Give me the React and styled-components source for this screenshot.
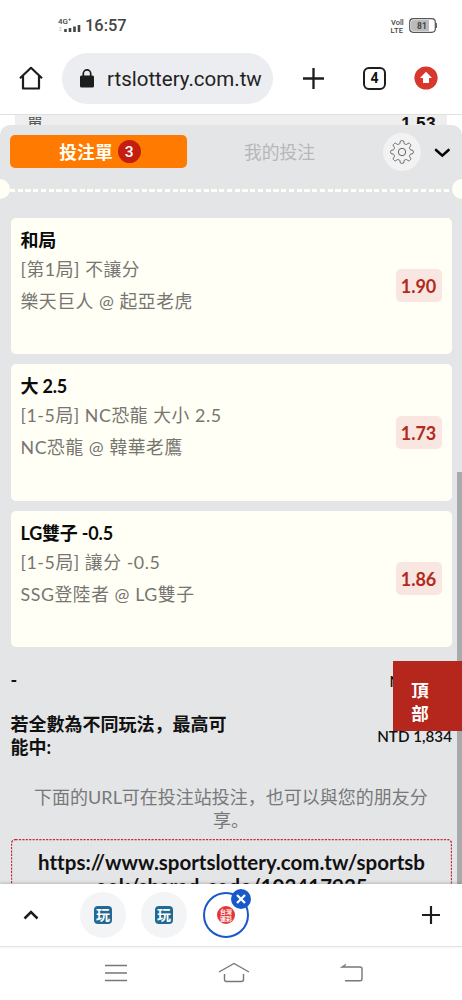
import React from "react";
import styled, { createGlobalStyle } from "styled-components";

const Global = createGlobalStyle`
  * { box-sizing: border-box; }
  body { margin: 0; background: #fff; font-family: Lato, "Noto Sans CJK SC", sans-serif; color: #111; }
`;

const Screen = styled.div`
  width: 462px;
  height: 1000px;
  display: flex;
  flex-direction: column;
  overflow: hidden;
  background: #fff;
`;

const StatusBar = styled.header`
  height: 50px;
  flex: none;
  display: flex;
  align-items: center;
  padding: 1px 25px 0 57px;
  font-family: Roboto, sans-serif;
  color: #444;
`;

const Clock = styled.span`
  margin-left: 4px;
  font-size: 16.4px;
  font-weight: 500;
  line-height: 20px;
`;

const Signal = styled.svg`
  width: 24px;
  height: 18px;
`;

const StatusRight = styled.div`
  margin-left: auto;
  display: flex;
  align-items: center;
  gap: 5px;
`;

const BrowserBar = styled.div`
  height: 65px;
  flex: none;
  display: flex;
  align-items: center;
  padding: 0 24px 8px 19px;
  border-bottom: 1px solid #e0e0e0;
`;

const Address = styled.div`
  flex: none;
  width: 211px;
  height: 51px;
  margin: 0 30px 0 19px;
  padding: 1px 0 0 17px;
  display: flex;
  align-items: center;
  gap: 12px;
  border-radius: 26px;
  background: #ecedf1;
  font: 400 20.5px/24px Roboto, sans-serif;
  color: #222;
  white-space: nowrap;
`;

const TabCount = styled.div`
  flex: none;
  width: 23px;
  height: 23px;
  margin: 0 28px 0 39px;
  border: 2px solid #1d1d1d;
  border-radius: 6px;
  text-align: center;
  font: 700 14px/19px Roboto, sans-serif;
`;

const Viewport = styled.main`
  height: 769px;
  flex: none;
  overflow: hidden;
  position: relative;
`;

const PageRow = styled.div`
  height: 22px;
  margin: 0 15px;
  padding: 0 11px 0 12px;
  display: flex;
  justify-content: space-between;
  background: #eee;
  color: #555;
  font-size: 16px;
  line-height: 18px;
  b { color: #111; font: 700 17.5px/19px "Liberation Sans", sans-serif; letter-spacing: 0.2px; }
`;

const Sheet = styled.section`
  position: relative;
  height: 760px;
  margin-top: -12px;
  border-radius: 10px 10px 0 0;
  background: #e4e5e7;
`;

const SheetHeader = styled.div`
  display: flex;
  align-items: center;
  height: 54px;
  padding: 0 11px 1px 10px;
`;

const SlipTab = styled.button`
  display: flex;
  align-items: center;
  justify-content: center;
  width: 177px;
  height: 33px;
  padding: 0 0 0 3px;
  gap: 5px;
  border: 0;
  border-radius: 5px;
  background: #ff7a00;
  color: #fffff5;
  font: 700 17.8px/26px Lato, "Noto Sans CJK SC", sans-serif;
`;

const Count = styled.span`
  width: 23px;
  height: 23px;
  border-radius: 50%;
  background: #c31e10;
  color: #fff;
  font: 500 15.5px/24px Roboto, sans-serif;
`;

const MyBets = styled.div`
  width: 185px;
  padding-bottom: 1px;
  text-align: center;
  font-size: 17.8px;
  font-weight: 400;
  color: #b6b7b9;
`;

const GearButton = styled.div`
  width: 38px;
  height: 38px;
  margin: 0 12px 0 11px;
  display: grid;
  place-items: center;
  border-radius: 50%;
  background: #f2f2f2;
`;

const Tear = styled.div`
  height: 20px;
  display: flex;
  align-items: center;
  overflow: hidden;
  &::before, &::after {
    content: "";
    width: 10px;
    height: 20px;
    background: #fffff5;
  }
  &::before { border-radius: 0 10px 10px 0; }
  &::after { border-radius: 10px 0 0 10px; }
`;

const Dashes = styled.div`
  flex: 1;
  height: 3px;
  margin-top: 2px;
  background: repeating-linear-gradient(90deg, #fffffa 0 5px, transparent 5px 7.75px);
`;

const Cards = styled.div`
  display: flex;
  flex-direction: column;
  gap: 10px;
  padding: 18.5px 10.5px 0 10.5px;
`;

const Card = styled.article`
  display: flex;
  align-items: center;
  justify-content: space-between;
  height: 136.5px;
  padding: 0 10px;
  border-radius: 5px;
  background: #fffff5;
`;

const CardText = styled.div`
  align-self: flex-start;
  padding-top: 9px;
  font-size: 17.8px;
  font-weight: 400;
  line-height: 32px;
  letter-spacing: 0.56px;
  color: #777571;
  h3 {
    margin: 0 0 -1px;
    font-size: 18px;
    font-weight: 700;
    line-height: 27px;
    letter-spacing: -0.2px;
    color: #0b0b0b;
  }
`;

const Odds = styled.div`
  width: 46px;
  height: 33px;
  border-radius: 5px;
  background: #f9e6e1;
  color: #b12a20;
  text-align: center;
  font-size: 18px;
  font-weight: 700;
  line-height: 34px;
`;

const Summary = styled.div`
  display: flex;
  justify-content: space-between;
  align-items: center;
  padding: 0 10px 0 10.5px;
  height: ${(p) => p.$height}px;
  font-size: 18px;
  line-height: 23px;
  font-weight: 700;
  color: #111;
  p { width: 218px; margin: 0; }
  span { font-size: 15.2px; font-weight: 600; padding-top: 2px; }
`;

const Hint = styled.p`
  margin: 28px 28px 7px;
  text-align: center;
  font-size: 18px;
  font-weight: 400;
  line-height: 23px;
  color: #777879;
`;

const ShareBox = styled.div`
  position: relative;
  height: 80px;
  margin: 0 10px 0 11px;
  padding: 11px 0;
  text-align: center;
  font-size: 20.5px;
  font-weight: 700;
  font-variant-ligatures: none;
  line-height: 24px;
  white-space: nowrap;
`;

const ShareOutline = styled.svg`
  position: absolute;
  inset: 0;
  width: 100%;
  height: 100%;
`;

const ScrollThumb = styled.div`
  position: absolute;
  right: 0;
  top: 357px;
  width: 5px;
  height: 412px;
  background: #a9aaac;
`;

const TopButton = styled.button`
  position: absolute;
  right: 0;
  top: 546px;
  width: 69px;
  height: 70px;
  padding: 10px 25px 0 10px;
  border: 0;
  display: block;
  background: #b5261c;
  color: #fff;
  font: 700 17.5px/23px "Noto Sans CJK SC", sans-serif;
`;

const TabStrip = styled.div`
  position: relative;
  height: 63px;
  flex: none;
  display: flex;
  align-items: center;
  padding: 0 22px 1px 22px;
  border-bottom: 1.5px solid #e2e2e2;
  background: #fff;
  box-shadow: 0 -1px 3px #0003;
`;

const Favicon = styled.div`
  position: relative;
  width: 46px;
  height: 46px;
  margin-left: ${(p) => p.$gap}px;
  display: grid;
  place-items: center;
  border-radius: 50%;
  border: ${(p) => (p.$active ? "2.5px solid #1858c8" : "0")};
  background: ${(p) => (p.$active ? "#fff" : "#f3f4f5")};
`;

const SiteMark = styled.div`
  width: 18px;
  height: 18px;
  border-radius: 4px;
  background: #206a94;
  color: #fff;
  text-align: center;
  font: 700 14px/16px "Noto Sans CJK SC", sans-serif;
`;

const LotteryMark = styled.div`
  width: 18px;
  height: 18px;
  display: flex;
  flex-direction: column;
  align-items: center;
  justify-content: center;
  border-radius: 50%;
  background: #e33636;
  color: #fff;
  font: 700 6px/7px "Noto Sans CJK SC", sans-serif;
`;

const Close = styled.svg`
  position: absolute;
  top: -5px;
  right: -4px;
  width: 20px;
  height: 20px;
`;

const PushRight = styled.div`
  margin-left: auto;
  display: flex;
`;

const NavBar = styled.nav`
  flex: 1;
  display: flex;
  justify-content: space-between;
  padding: 13px 98px 0 105px;
`;

const bets = [
  { pick: "和局", market: "[第1局] 不讓分", game: "樂天巨人 @ 起亞老虎", odds: "1.90" },
  { pick: "大 2.5", market: "[1-5局] NC恐龍 大小 2.5", game: "NC恐龍 @ 韓華老鷹", odds: "1.73" },
  { pick: "LG雙子 -0.5", market: "[1-5局] 讓分 -0.5", game: "SSG登陸者 @ LG雙子", odds: "1.86" },
];

const gearPath = (() => {
  const pts = [];
  for (let i = 0; i <= 128; i++) {
    const a = (i / 128) * Math.PI * 2;
    const r = 9.9 + 1.5 * Math.tanh(2.4 * Math.cos(8 * a));
    pts.push(`${(12 + r * Math.cos(a)).toFixed(2)} ${(12 + r * Math.sin(a)).toFixed(2)}`);
  }
  return `M${pts.join("L")}Z`;
})();

const Plus = ({ size, weight }) => (
  <svg width={size} height={size} viewBox="0 0 20 20" stroke="#1d1d1d" strokeWidth={weight}>
    <path d="M10 0v20M0 10h20" />
  </svg>
);

export default function App() {
  return (
    <Screen>
      <Global />
      <StatusBar>
        <Signal viewBox="0 0 24 18">
          <text x="1" y="7" fontSize="8" fontWeight="500" fill="#444">4G⁺</text>
          <path d="M3.5 10v5" stroke="#ccc" strokeWidth="2" strokeDasharray="1.5 1" />
          <path d="M8.500 15v-3M13 15v-4M17.500 15V9.500M22 15V8" stroke="#444" strokeWidth="2.600" />
        </Signal>
        <Clock>16:57</Clock>
        <StatusRight>
          <svg width="14" height="16" viewBox="0 0 14 16" fill="#444" fontWeight="500">
            <text x="1" y="7.200" fontSize="7.500">Vo</text>
            <path d="M11 1v6M12.800 1v6" stroke="#444" strokeWidth="0.900" />
            <text x="0.500" y="15" fontSize="7.500" textLength="12.500">LTE</text>
          </svg>
          <svg width="28" height="15" viewBox="0 0 28 15">
            <rect x="0.7" y="0.7" width="25.600" height="13.600" rx="3.500" fill="#fff" stroke="#555" strokeWidth="1.200" />
            <path d="M4.500 2H20v11H4.500A2.500 2.500 0 0 1 2 10.500v-6A2.500 2.500 0 0 1 4.500 2Z" fill="#bbb" />
            <path d="M27.300 5v5" stroke="#555" strokeWidth="1.200" />
            <text x="13" y="10.600" textAnchor="middle" fontSize="8.500" fontWeight="700" fill="#444">81</text>
          </svg>
        </StatusRight>
      </StatusBar>
      <BrowserBar>
        <svg width="24" height="24" viewBox="0 0 24 24" fill="none" stroke="#1d1d1d" strokeWidth="2.200">
          <path d="M1 12.300 12 1.800l11 10.500M4 10v12.500h16V10" strokeLinejoin="round" />
        </svg>
        <Address>
          <svg width="16" height="19" viewBox="0 0 16 19">
            <rect x="1" y="6.500" width="14" height="12" rx="1.500" fill="#1d1d1d" />
            <path d="M4.300 7V4.600a3.700 3.700 0 0 1 7.400 0V7" fill="none" stroke="#1d1d1d" strokeWidth="1.700" />
          </svg>
          rtslottery.com.tw
        </Address>
        <Plus size={21} weight={2.2} />
        <TabCount>4</TabCount>
        <svg width="24" height="24" viewBox="0 0 24 24">
          <circle cx="12" cy="12" r="11.600" fill="#d7372d" />
          <path d="m12 5.800 6 6.200h-3v5H9v-5H6Z" fill="#fff" />
        </svg>
      </BrowserBar>
      <Viewport>
        <PageRow>
          <span>單</span>
          <b>1.53</b>
        </PageRow>
        <Sheet>
          <SheetHeader>
            <SlipTab>投注單<Count>3</Count></SlipTab>
            <MyBets>我的投注</MyBets>
            <GearButton>
              <svg width="24" height="24" viewBox="0 0 24 24" fill="none" stroke="#555" strokeWidth="0.900">
                <path d={gearPath} />
                <circle cx="12" cy="12" r="3.700" />
              </svg>
            </GearButton>
            <svg width="18" height="12" viewBox="0 0 18 12" fill="none" stroke="#050505" strokeWidth="2.600">
              <path d="m3 4 6.300 5.600L15.600 4" strokeLinecap="round" />
            </svg>
          </SheetHeader>
          <Tear><Dashes /></Tear>
          <Cards>
            {bets.map((b) => (
              <Card key={b.odds}>
                <CardText>
                  <h3>{b.pick}</h3>
                  <div>{b.market}</div>
                  <div>{b.game}</div>
                </CardText>
                <Odds>{b.odds}</Odds>
              </Card>
            ))}
          </Cards>
          <Summary $height={66}>
            <p>-</p>
            <span>NTD 300</span>
          </Summary>
          <Summary $height={45}>
            <p>若全數為不同玩法，最高可能中:</p>
            <span>NTD 1,834</span>
          </Summary>
          <Hint>下面的URL可在投注站投注，也可以與您的朋友分享。</Hint>
          <ShareBox>
            <ShareOutline>
              <rect x="0.500" y="0.500" width="440" height="78" rx="4" fill="none" stroke="#c52b3f" strokeWidth="1.300" strokeDasharray="2.200 1.200" />
            </ShareOutline>
            https://www.sportslottery.com.tw/sportsb<br />ook/shared-code/103417935
          </ShareBox>
        </Sheet>
        <ScrollThumb />
        <TopButton>頂<br />部</TopButton>
      </Viewport>
      <TabStrip>
        <svg width="18" height="12" viewBox="0 0 18 12" fill="none" stroke="#1d1d1d" strokeWidth="2.500">
          <path d="m2.500 9.500 6.500-6.500 6.500 6.500" />
        </svg>
        <Favicon $gap={40}><SiteMark>玩</SiteMark></Favicon>
        <Favicon $gap={15}><SiteMark>玩</SiteMark></Favicon>
        <Favicon $gap={16} $active>
          <LotteryMark><span>台灣</span><span>運彩</span></LotteryMark>
          <Close viewBox="0 0 20 20">
            <circle cx="10" cy="10" r="10" fill="#1858c8" />
            <path d="m6 6 8 8m0-8-8 8" stroke="#fff" strokeWidth="2.300" />
          </Close>
        </Favicon>
        <PushRight><Plus size={18} weight={2.4} /></PushRight>
      </TabStrip>
      <NavBar>
        <svg width="22" height="26" viewBox="0 0 22 26" stroke="#777" strokeWidth="1.500">
          <path d="M0 5.500h22M0 13h22M0 20.500h22" />
        </svg>
        <svg width="32" height="26" viewBox="0 0 32 26" fill="none" stroke="#777" strokeWidth="1.400">
          <path d="M1 12 16 3.500 31 12M6.500 14v5.500q0 2 2 2h15q2 0 2-2V14" />
        </svg>
        <svg width="24" height="26" viewBox="0 0 24 26" fill="none" stroke="#777" strokeWidth="1.400">
          <path d="M5 20.800h15q2 0 2-2V9q0-2-2-2H2l4-2.500" />
        </svg>
      </NavBar>
    </Screen>
  );
}
